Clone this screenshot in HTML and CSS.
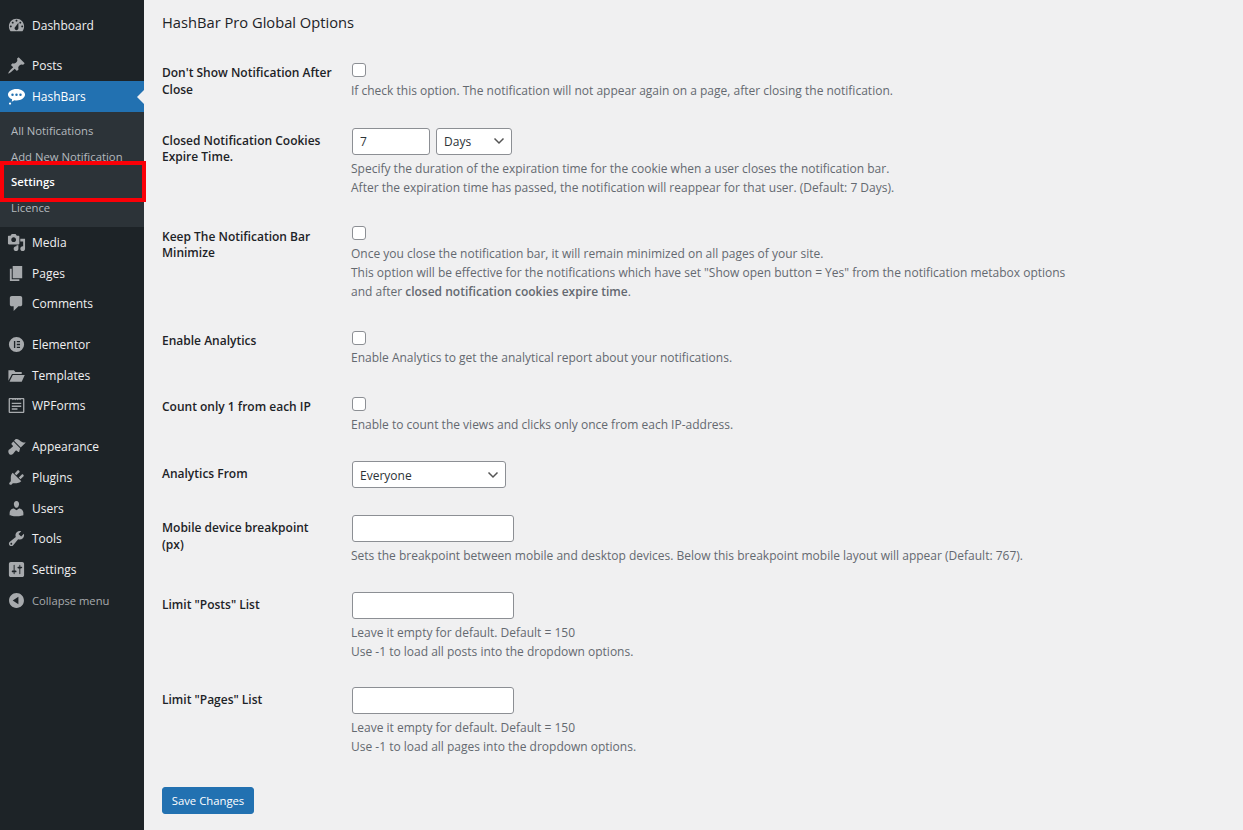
FILE: index.html
```html
<!DOCTYPE html>
<html lang="en">

<head>
  <meta charset="UTF-8" />
  <title>HashBar Pro Global Options</title>
  <link rel="stylesheet" href="styles.css">
</head>

<body>
  <aside class="sidebar">
    <ul class="menu">
      <li class="menu-item"><svg class="icon" viewBox="0 0 20 20"><path d="M3.76 16h12.48c1.1-1.37 1.76-3.11 1.76-5 0-4.42-3.58-8-8-8s-8 3.58-8 8c0 1.89.66 3.63 1.76 5zM10 4c.55 0 1 .45 1 1s-.45 1-1 1-1-.45-1-1 .45-1 1-1zM6 6c.55 0 1 .45 1 1s-.45 1-1 1-1-.45-1-1 .45-1 1-1zm8 0c.55 0 1 .45 1 1s-.45 1-1 1-1-.45-1-1 .45-1 1-1zm-5.37 5.55L12 7v6c0 1.1-.9 2-2 2s-2-.9-2-2c0-.57.24-1.08.63-1.45zM4 10c.55 0 1 .45 1 1s-.45 1-1 1-1-.45-1-1 .45-1 1-1zm12 0c.55 0 1 .45 1 1s-.45 1-1 1-1-.45-1-1 .45-1 1-1z" fill-rule="evenodd"/></svg>Dashboard</li>
      <li class="menu-sep"></li>
      <li class="menu-item"><svg class="icon" viewBox="0 0 20 20"><path d="M10.44 3.02l1.82-1.82 6.36 6.35-1.83 1.82c-1.05-.68-2.48-.57-3.41.36l-.75.75c-.92.93-1.04 2.35-.35 3.41l-1.83 1.82-2.41-2.41-2.8 2.79c-.42.42-3.38 2.71-3.8 2.29s1.86-3.39 2.28-3.81l2.79-2.79L4.1 9.36l1.83-1.82c1.05.69 2.48.57 3.4-.36l.75-.75c.93-.92 1.05-2.35.36-3.41z"/></svg>Posts</li>
      <li class="menu-item current"><svg class="icon" viewBox="0 0 20 20"><path d="M10 2c5 0 9 2.600 9 6s-4 6.200-9 6.200c-.8 0-1.500-.1-2.200-.2L5 15.600 5.400 13C2.700 12 1 10.200 1 8c0-3.400 4-6 9-6zM5.800 6.800a1.300 1.300 0 1 0 0 2.600 1.300 1.300 0 0 0 0-2.600zm4.200 0a1.300 1.300 0 1 0 0 2.600 1.300 1.300 0 0 0 0-2.600zm4.200 0a1.300 1.300 0 1 0 0 2.600 1.300 1.300 0 0 0 0-2.600zM3.200 16.200a1.200 1.200 0 1 1 0 2.400 1.200 1.200 0 0 1 0-2.400z" fill-rule="evenodd"/></svg>HashBars</li>
      <li>
        <ul class="submenu">
          <li>All Notifications</li>
          <li>Add New Notification</li>
          <li class="active">Settings</li>
          <li>Licence</li>
        </ul>
      </li>
      <li class="menu-item"><svg class="icon" viewBox="0 0 20 20"><path d="M13 11V4c0-.55-.45-1-1-1h-1.670L9 1H5L3.670 3H2c-.55 0-1 .45-1 1v7c0 .55.45 1 1 1h10c.55 0 1-.45 1-1zM7 4.500c1.380 0 2.500 1.120 2.500 2.500S8.380 9.500 7 9.500 4.500 8.380 4.500 7 5.620 4.500 7 4.500zM14 6h5v10.500c0 1.380-1.120 2.500-2.500 2.500S14 17.880 14 16.500s1.120-2.500 2.500-2.500c.17 0 .34.020.5.050V9h-3V6zm-4 8.050V13h2v3.500c0 1.380-1.120 2.500-2.500 2.500S7 17.880 7 16.500 8.120 14 9.500 14c.17 0 .34.020.5.050z"/></svg>Media</li>
      <li class="menu-item"><svg class="icon" viewBox="0 0 20 20"><path d="M6 15V2h10v13H6zm-1 1h8v2H3V5h2v11z"/></svg>Pages</li>
      <li class="menu-item"><svg class="icon" viewBox="0 0 20 20"><path d="M5 2h9c1.100 0 2 .9 2 2v7c0 1.100-.9 2-2 2h-2l-5 5v-5H5c-1.100 0-2-.9-2-2V4c0-1.100.9-2 2-2z"/></svg>Comments</li>
      <li class="menu-sep"></li>
      <li class="menu-item"><svg class="icon" viewBox="0 0 20 20"><path d="M10 2a8 8 0 1 0 0 16 8 8 0 0 0 0-16zM7.300 6.300h1.400v7.400H7.300zm3 0h3.400v1.400h-3.400zm0 3h3.400v1.400h-3.400zm0 3h3.400v1.400h-3.400z" fill-rule="evenodd"/></svg>Elementor</li>
      <li class="menu-item"><svg class="icon" viewBox="0 0 20 20"><path d="M1.500 15.500V4.500h5.800l1.600 1.800h6.600v2H5.300zM2.600 16.500l3.500-7h12.600l-3.200 7z"/></svg>Templates</li>
      <li class="menu-item"><svg class="icon" viewBox="0 0 20 20"><path d="M3 2h14c.8 0 1.300.5 1.300 1.300v13.400c0 .8-.5 1.300-1.300 1.300H3c-.8 0-1.300-.5-1.300-1.300V3.300C1.700 2.500 2.200 2 3 2zm.1 1.300v13.400h13.800V3.300h-2.100l-1 1.200-1.200-1.200-1.300 1.200-1.300-1.200-1.300 1.200-1.300-1.200-1.200 1.200-1-1.200zM5 7h10v1.500H5zm0 3h10v1.500H5zm0 3h6v1.500H5z" fill-rule="evenodd"/></svg>WPForms</li>
      <li class="menu-sep"></li>
      <li class="menu-item"><svg class="icon" viewBox="0 0 20 20"><path d="M14.480 11.060L7.410 3.990l1.500-1.500c.5-.56 2.300-.47 3.510.32 1.210.8 1.430 1.280 2.910 2.100 1.180.64 2.450 1.260 4.450.85zm-.71.71L6.700 4.700 4.930 6.470c-.39.39-.39 1.020 0 1.410l1.060 1.060c.39.39.39 1.030 0 1.420-.6.6-1.430 1.110-2.210 1.690-.35.26-.7.53-1.010.84C1.430 13.230.91 15.240 1.840 17c.93 1.760 3.020 2.230 4.630.68.3-.31.57-.66.83-1 .58-.78 1.100-1.620 1.700-2.210.39-.39 1.020-.39 1.410 0l1.060 1.060c.39.39 1.020.39 1.410 0z"/></svg>Appearance</li>
      <li class="menu-item"><svg class="icon" viewBox="0 0 20 20"><path d="M13.110 4.360L9.870 7.600 8 5.730l3.240-3.240c.35-.34 1.050-.2 1.560.32.52.51.66 1.210.31 1.550zm-8 1.770l.91-1.120 9.010 9.010-1.190.84c-.71.71-2.630 1.160-3.820 1.160H6.140L4.900 17.260c-.59.59-1.540.59-2.120 0-.59-.58-.59-1.530 0-2.120l1.240-1.240v-3.880c0-1.130.4-3.190 1.090-3.890zm7.260 3.970l3.240-3.240c.34-.35 1.040-.21 1.550.31.52.51.66 1.210.31 1.550l-3.240 3.250z"/></svg>Plugins</li>
      <li class="menu-item"><svg class="icon" viewBox="0 0 20 20"><path d="M10 9.250c-2.270 0-2.730-3.440-2.730-3.440C7 4.020 7.820 2 9.970 2c2.160 0 2.980 2.020 2.710 3.810 0 0-.41 3.440-2.680 3.440zm0 2.570L12.720 10c2.390 0 4.520 2.330 4.520 4.530v2.490s-3.650 1.130-7.240 1.130c-3.650 0-7.240-1.130-7.240-1.130v-2.490c0-2.250 1.940-4.480 4.470-4.480z"/></svg>Users</li>
      <li class="menu-item"><svg class="icon" viewBox="0 0 20 20"><path d="M16.680 9.770c-1.340 1.340-3.300 1.670-4.950.99l-5.410 6.520c-.99.99-2.590.99-3.580 0s-.99-2.590 0-3.570l6.520-5.420c-.68-1.650-.35-3.610.99-4.950 1.280-1.280 3.120-1.620 4.720-1.060l-2.890 2.890 2.820 2.820 2.860-2.870c.53 1.580.18 3.390-1.080 4.650zM3.810 16.210c.4.39 1.040.39 1.430 0 .4-.4.4-1.040 0-1.430-.39-.4-1.030-.4-1.430 0-.39.39-.39 1.030 0 1.430z"/></svg>Tools</li>
      <li class="menu-item"><svg class="icon" viewBox="0 0 20 20"><path d="M18 16V4c0-1.100-.9-2-2-2H4c-1.100 0-2 .9-2 2v12c0 1.100.9 2 2 2h12c1.100 0 2-.9 2-2zM8 11h1c.55 0 1 .45 1 1s-.45 1-1 1H8v1.500c0 .28-.22.5-.5.5s-.5-.22-.5-.5V13H6c-.55 0-1-.45-1-1s.45-1 1-1h1V5.500c0-.28.22-.5.5-.5s.5.22.5.5V11zm5-2h-1c-.55 0-1-.45-1-1s.45-1 1-1h1V5.500c0-.28.22-.5.5-.5s.5.22.5.5V7h1c.55 0 1 .45 1 1s-.45 1-1 1h-1v5.500c0 .28-.22.5-.5.5s-.5-.22-.5-.5V9z"/></svg>Settings</li>
      <li class="menu-item collapse"><svg class="icon" viewBox="0 0 20 20"><path d="M10 2.160c4.330 0 7.840 3.510 7.840 7.840s-3.510 7.840-7.840 7.840S2.160 14.330 2.160 10 5.710 2.160 10 2.160zM12 14V6l-6 4z" fill-rule="evenodd"/></svg>Collapse menu</li>
    </ul>
    <div class="callout"></div>
  </aside>

  <main class="content">
    <h2 class="page-title">HashBar Pro Global Options</h2>

    <form class="options">
      <div class="row">
        <label class="row-label">Don't Show Notification After Close</label>
        <div class="row-field">
          <input type="checkbox" class="check">
          <p class="desc">If check this option. The notification will not appear again on a page, after closing the notification.</p>
        </div>
      </div>

      <div class="row row-control">
        <label class="row-label">Closed Notification Cookies Expire Time.</label>
        <div class="row-field">
          <div class="inline-fields">
            <input type="text" class="input input-small" value="7">
            <select class="select select-small">
              <option>Days</option>
            </select>
          </div>
          <p class="desc">Specify the duration of the expiration time for the cookie when a user closes the notification bar.<br>After the expiration time has passed, the notification will reappear for that user. (Default: 7 Days).</p>
        </div>
      </div>

      <div class="row">
        <label class="row-label">Keep The Notification Bar Minimize</label>
        <div class="row-field">
          <input type="checkbox" class="check">
          <p class="desc">Once you close the notification bar, it will remain minimized on all pages of your site.<br>This option will be effective for the notifications which have set "Show open button = Yes" from the notification metabox options<br>and after <strong>closed notification cookies expire time</strong>.</p>
        </div>
      </div>

      <div class="row">
        <label class="row-label">Enable Analytics</label>
        <div class="row-field">
          <input type="checkbox" class="check">
          <p class="desc">Enable Analytics to get the analytical report about your notifications.</p>
        </div>
      </div>

      <div class="row">
        <label class="row-label">Count only 1 from each IP</label>
        <div class="row-field">
          <input type="checkbox" class="check">
          <p class="desc">Enable to count the views and clicks only once from each IP-address.</p>
        </div>
      </div>

      <div class="row row-control row-select">
        <label class="row-label">Analytics From</label>
        <div class="row-field">
          <select class="select select-wide">
            <option>Everyone</option>
          </select>
        </div>
      </div>

      <div class="row row-control">
        <label class="row-label">Mobile device breakpoint (px)</label>
        <div class="row-field">
          <input type="text" class="input">
          <p class="desc">Sets the breakpoint between mobile and desktop devices. Below this breakpoint mobile layout will appear (Default: 767).</p>
        </div>
      </div>

      <div class="row row-control row-tight">
        <label class="row-label">Limit "Posts" List</label>
        <div class="row-field">
          <input type="text" class="input">
          <p class="desc">Leave it empty for default. Default = 150<br>Use -1 to load all posts into the dropdown options.</p>
        </div>
      </div>

      <div class="row row-control">
        <label class="row-label">Limit "Pages" List</label>
        <div class="row-field">
          <input type="text" class="input">
          <p class="desc">Leave it empty for default. Default = 150<br>Use -1 to load all pages into the dropdown options.</p>
        </div>
      </div>

      <button type="button" class="save-button">Save Changes</button>
    </form>
  </main>
</body>

</html>
```

FILE: styles.css
```css
* {
  box-sizing: border-box;
}

html,
body {
  height: 830px;
}

body {
  margin: 0;
  display: flex;
  overflow: hidden;
  font-family: "Open Sans", "Noto Sans", sans-serif;
  font-size: 12px;
  background-color: #f0f0f1;
  color: #3c434a;
}

ul {
  list-style: none;
  margin: 0;
  padding: 0;
}

/* sidebar */
.sidebar {
  position: relative;
  flex: 0 0 144px;
  background-color: #1d2327;
  padding-top: 9.7px;
}

.menu-item {
  display: flex;
  align-items: center;
  gap: 6px;
  height: 30.7px;
  padding-left: 7px;
  color: #f0f0f1;
}

.menu-sep {
  height: 10.1px;
}

.icon {
  flex: 0 0 19px;
  width: 19px;
  height: 19px;
  fill: #a7aaad;
}

.menu-item.current {
  position: relative;
  background-color: #2271b1;
  color: #fff;
}

.menu-item.current .icon {
  fill: #fff;
}

.menu-item.current::after {
  content: "";
  position: absolute;
  right: 0;
  top: 50%;
  margin-top: -7px;
  border: 7px solid transparent;
  border-right-color: #f0f0f1;
  border-left-width: 0;
}

.menu-item.collapse {
  color: #a7aaad;
  font-size: 11.2px;
}

.submenu {
  background-color: #2c3338;
  padding: 6px 0 6.4px;
  font-size: 11.3px;
  color: #b4b9be;
}

.submenu li {
  height: 25.7px;
  line-height: 25.7px;
  padding-left: 11px;
}

.submenu li.active {
  color: #fff;
  font-weight: 600;
}

/* red marker drawn over the menu */
.callout {
  position: absolute;
  left: 0;
  top: 161px;
  width: 146px;
  height: 41px;
  border: 4px solid #fb0007;
}

/* main */
.content {
  flex: 1;
  padding: 13px 18px 16px;
}

.page-title {
  margin: 0 0 30px;
  font-size: 14.7px;
  line-height: 18px;
  font-weight: 500;
  color: #1d2327;
}

.row {
  display: grid;
  grid-template-columns: 189px 1fr;
  margin-bottom: 27.7px;
}

.row:first-child {
  margin-bottom: 28.2px;
}

.row-select {
  margin-bottom: 26.7px;
}

.row-tight {
  margin-bottom: 25.7px;
}

.row-label {
  width: 171px;
  padding-top: 4.4px;
  line-height: 16.6px;
  font-weight: 600;
  color: #1d2327;
}

.row-control .row-label {
  padding-top: 5px;
}

.row-field {
  min-width: 0;
}

.check {
  display: block;
  appearance: none;
  width: 14px;
  height: 14px;
  margin: 2px 0 0 1px;
  background-color: #fff;
  border: 1px solid #8c8f94;
  border-radius: 3px;
}

.desc {
  margin: 3.7px 0 0;
  line-height: 19px;
  color: #646970;
}

.desc strong {
  font-weight: 600;
}

.inline-fields {
  display: flex;
  gap: 6px;
}

.input,
.select {
  display: block;
  height: 27px;
  margin-left: 1px;
  padding: 0 7px;
  font: inherit;
  color: #2c3338;
  background-color: #fff;
  border: 1px solid #8c8f94;
  border-radius: 3px;
}

.input {
  width: 162px;
}

.input-small {
  width: 78px;
}

.select {
  appearance: none;
  padding: 1px 20px 0 7px;
  background-image: url("data:image/svg+xml,%3Csvg xmlns='http://www.w3.org/2000/svg' viewBox='0 0 12 12'%3E%3Cpath d='M1.500 3.500L6 8l4.500-4.500' fill='none' stroke='%23555' stroke-width='1.500'/%3E%3C/svg%3E");
  background-repeat: no-repeat;
  background-position: right 6px center;
  background-size: 12px 12px;
}

.select-small {
  width: 76px;
  margin-left: 0;
}

.select-wide {
  width: 154px;
}

.save-button {
  display: block;
  width: 92px;
  height: 27px;
  margin-top: 31.7px;
  padding: 0;
  font: inherit;
  font-size: 11.3px;
  color: #fff;
  background-color: #2271b1;
  border: 1px solid #2271b1;
  border-radius: 3px;
}
```
